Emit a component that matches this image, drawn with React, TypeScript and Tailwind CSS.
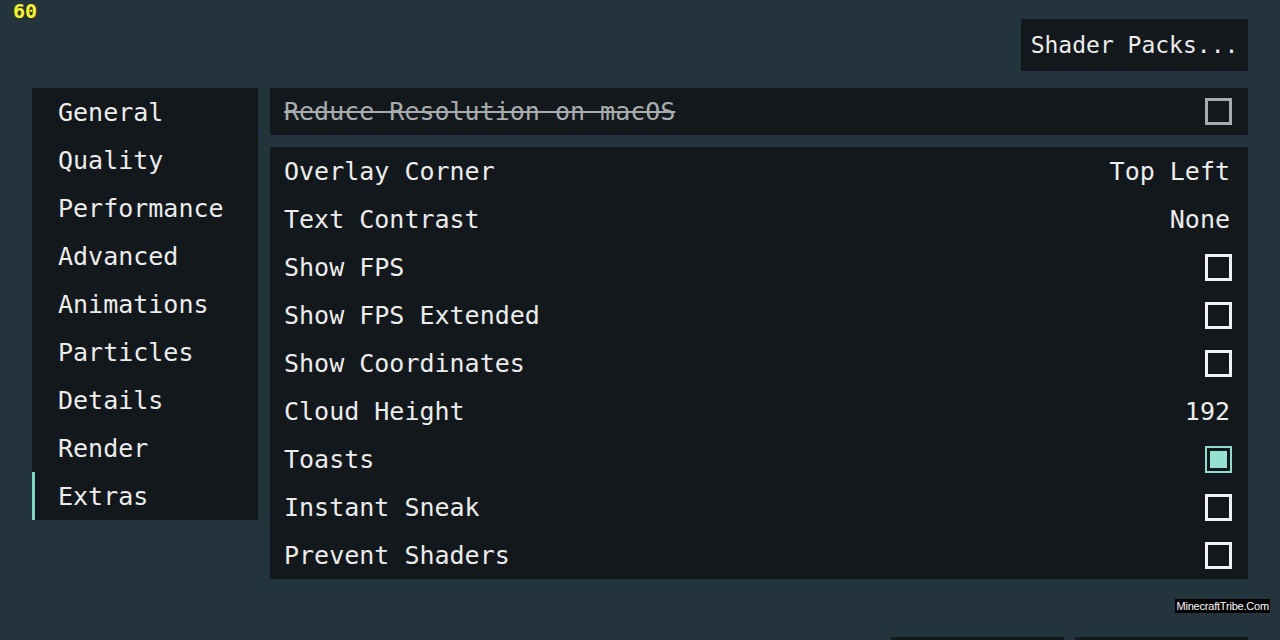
const font = { fontFamily: '"DejaVu Sans Mono", "Liberation Mono", monospace' }

const tabs = [
  "General",
  "Quality",
  "Performance",
  "Advanced",
  "Animations",
  "Particles",
  "Details",
  "Render",
  "Extras",
]

type Row = { label: string; value?: string; check?: boolean }

const rows: Row[] = [
  { label: "Overlay Corner", value: "Top Left" },
  { label: "Text Contrast", value: "None" },
  { label: "Show FPS", check: false },
  { label: "Show FPS Extended", check: false },
  { label: "Show Coordinates", check: false },
  { label: "Cloud Height", value: "192" },
  { label: "Toasts", check: true },
  { label: "Instant Sneak", check: false },
  { label: "Prevent Shaders", check: false },
]

function Checkbox({ on, disabled }: { on?: boolean; disabled?: boolean }) {
  if (on) {
    return (
      <span className="flex size-[27px] items-center justify-center border-[2px] border-[#8fdccb]">
        <span className="size-[23px] border-[3px] border-[#12191d] bg-[#96e0d0]" />
      </span>
    )
  }
  return (
    <span
      className={
        "size-[27px] border-[3px] " +
        (disabled ? "border-[#a9acae]" : "border-[#f2f2f2]")
      }
    />
  )
}

export default function App() {
  return (
    <div
      className="relative flex h-[640px] w-[1280px] flex-col overflow-hidden bg-[#24343d] text-[25px] leading-none text-[#ececec]"
      style={font}
    >
      <span className="absolute left-[13px] top-[1px] text-[20px] font-bold text-[#f4f43c] [text-shadow:1px_1px_0_#3a3a10,-1px_0_0_#3a3a10]">
        60
      </span>

      <div className="flex justify-end pr-[32px] pt-[19px]">
        <div className="flex h-[52px] w-[227px] items-center justify-center bg-[#12181c] text-[23px]">
          Shader Packs...
        </div>
      </div>

      <div className="mt-[17px] flex items-start gap-[12px] px-[32px]">
        <div className="flex w-[226px] flex-col bg-[#12181c]">
          {tabs.map((t) =>
            t === "Extras" ? (
              <div
                key={t}
                className="flex h-[48px] items-center border-l-[3px] border-[#7fd3c2] pl-[23px]"
              >
                {t}
              </div>
            ) : (
              <div key={t} className="flex h-[48px] items-center pl-[26px]">
                {t}
              </div>
            ),
          )}
        </div>

        <div className="flex flex-1 flex-col gap-[12px]">
          <div className="flex h-[47px] items-center justify-between bg-[#12181c] pl-[14px] pr-[16px]">
            <span className="text-[#a9acae] line-through decoration-[2px]">
              Reduce Resolution on macOS
            </span>
            <Checkbox disabled />
          </div>

          <div className="flex flex-col bg-[#12181c]">
            {rows.map((r) => (
              <div
                key={r.label}
                className="flex h-[48px] items-center justify-between pl-[14px] pr-[16px]"
              >
                <span>{r.label}</span>
                {r.value ? (
                  <span className="pr-[2px]">{r.value}</span>
                ) : (
                  <Checkbox on={r.check} />
                )}
              </div>
            ))}
          </div>
        </div>
      </div>

      <div className="mt-[58px] flex justify-end gap-[11px] pr-[32px]">
        <div className="h-[40px] w-[173px] bg-[#12181c]" />
        <div className="h-[40px] w-[173px] bg-[#12181c]" />
      </div>

      <span
        className="absolute right-[10px] top-[599px] bg-black px-[1px] text-[11px] leading-[14px] tracking-[-0.2px] text-white"
        style={{ fontFamily: '"Liberation Sans", Arial, sans-serif' }}
      >
        MinecraftTribe.Com
      </span>
    </div>
  )
}
